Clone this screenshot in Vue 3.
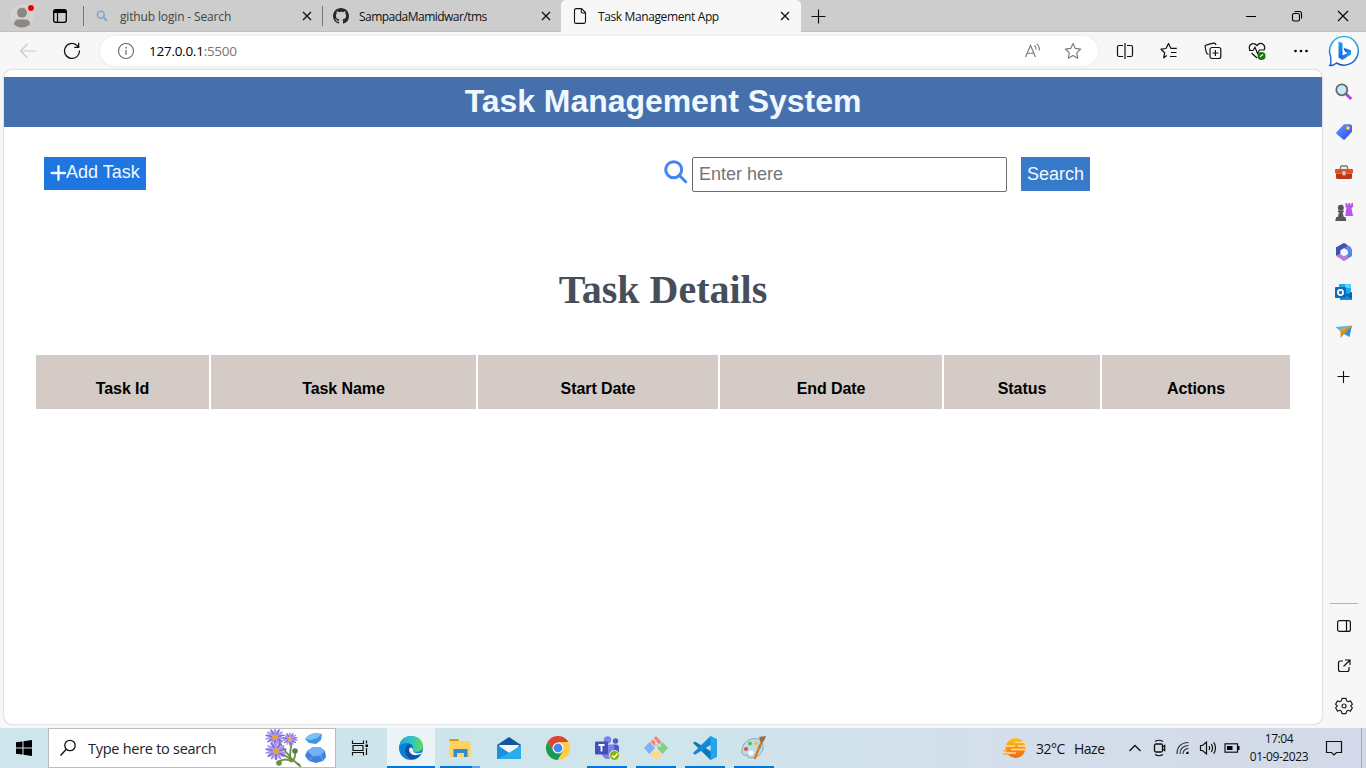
<script setup>
const columns = [
  { label: 'Task Id', cls: 'c-id' },
  { label: 'Task Name', cls: 'c-name' },
  { label: 'Start Date', cls: 'c-start' },
  { label: 'End Date', cls: 'c-end' },
  { label: 'Status', cls: 'c-status' },
  { label: 'Actions', cls: 'c-actions' },
]
</script>

<template>
  <div class="screen">
    <header class="tabs">
      <div class="profile">
        <svg width="30" height="30" viewBox="0 0 30 30">
          <circle cx="15" cy="15" r="10.5" fill="#d3d1ce" stroke="#dedad4" />
          <circle cx="15" cy="11.8" r="5" fill="#8b8784" />
          <path d="M7 23.5q0-5 4.500-5h7q4.500 0 4.500 5-3.500 3-8 3t-8-3z" fill="#8b8784" />
          <circle cx="24" cy="7" r="3.600" fill="#e80000" stroke="#f3dada" />
        </svg>
      </div>
      <div class="tabmenu">
        <svg width="16" height="16" viewBox="0 0 16 16"><rect x="1.700" y="1.700" width="12.600" height="12.600" rx="2" fill="none" stroke="#000" stroke-width="1.300" /><path d="M1.500 5V3.500q0-2 2-2h9q2 0 2 2V5z" fill="#000" /><path d="M5.500 4v10" stroke="#000" stroke-width="1.200" /></svg>
      </div>
      <div class="tab">
        <svg class="fav" width="16" height="16" viewBox="0 0 16 16"><circle cx="6.800" cy="6.700" r="3.400" fill="none" stroke="#77aad6" stroke-width="1.600" /><path d="M9.300 9.200l3.600 3.600" stroke="#77aad6" stroke-width="2" /></svg>
        <span class="tabname t1">github login - Search</span>
        <svg class="x" width="10" height="10" viewBox="0 0 10 10"><path d="M1 1l8 8M9 1L1 9" stroke="#111" stroke-width="1.300" /></svg>
      </div>
      <div class="tab">
        <svg class="fav" width="16" height="16" viewBox="0 0 16 16"><path fill="#24292f" d="M8 0C3.580 0 0 3.580 0 8c0 3.540 2.290 6.530 5.470 7.590.4.070.55-.17.55-.38v-1.490c-2.010.37-2.530-.49-2.690-.94-.09-.23-.48-.94-.82-1.130-.28-.15-.68-.52-.01-.53.63-.01 1.080.58 1.230.82.72 1.210 1.870.87 2.330.66.070-.52.280-.87.510-1.070-1.780-.2-3.640-.89-3.640-3.950 0-.87.310-1.590.82-2.150-.08-.2-.36-1.020.08-2.120 0 0 .67-.21 2.200.82A7.600 7.600 0 018 3.860c.68 0 1.360.09 2 .27 1.530-1.040 2.200-.82 2.200-.82.440 1.100.160 1.920.080 2.120.51.560.820 1.270.820 2.150 0 3.070-1.870 3.750-3.650 3.950.29.250.540.730.540 1.480v2.200c0 .21.150.46.550.38A8 8 0 0016 8c0-4.420-3.580-8-8-8z" /></svg>
        <span class="tabname t2">SampadaMamidwar/tms</span>
        <svg class="x" width="10" height="10" viewBox="0 0 10 10"><path d="M1 1l8 8M9 1L1 9" stroke="#111" stroke-width="1.300" /></svg>
      </div>
      <div class="tab active">
        <svg class="fav" width="16" height="16" viewBox="0 0 16 16"><path d="M4.500.6h5l4 4v9q0 1.800-1.500 1.800H4q-1.500 0-1.500-1.500V2.200Q2.500.6 4.500.6zM9.300.8v3q0 1.200 1.200 1.200h2.800" fill="none" stroke="#111" stroke-width="1.100" /></svg>
        <span class="tabname t3">Task Management App</span>
        <svg class="x" width="10" height="10" viewBox="0 0 10 10"><path d="M1 1l8 8M9 1L1 9" stroke="#111" stroke-width="1.300" /></svg>
      </div>
      <div class="newtab"><svg width="15" height="15" viewBox="0 0 15 15"><path d="M7.500.5v14M.5 7.500h14" stroke="#111" stroke-width="1.200" /></svg></div>
      <div class="winctl">
        <div><svg width="12" height="12" viewBox="0 0 12 12"><path d="M1 6.500h10" stroke="#000" /></svg></div>
        <div><svg width="12" height="12" viewBox="0 0 12 12"><rect x="1.500" y="3.500" width="7" height="7.500" rx="1.500" fill="none" stroke="#000" stroke-width="1.100" /><path d="M3.500 1.500h5q2 0 2 2v5" fill="none" stroke="#000" stroke-width="1.100" /></svg></div>
        <div><svg width="12" height="12" viewBox="0 0 12 12"><path d="M1 1l10 10M11 1L1 11" stroke="#000" stroke-width="1.100" /></svg></div>
      </div>
    </header>

    <div class="middle">
      <main class="left">
        <nav class="toolbar">
          <div class="nav-i back"><svg width="18" height="16" viewBox="0 0 18 16"><path d="M17 8H1.500M8.500 1L1.500 8l7 7" fill="none" stroke="#c9c9c9" stroke-width="1.200" /></svg></div>
          <div class="nav-i"><svg width="18" height="18" viewBox="0 0 18 18"><path d="M16.500 8.500A7.500 7.500 0 1 1 13.800 3.200L15.600 5M15.700.8V5.300H11.300" fill="none" stroke="#111" stroke-width="1.250" /></svg></div>
          <div class="address">
            <svg class="info" width="18" height="18" viewBox="0 0 18 18"><circle cx="9" cy="9" r="7.500" fill="none" stroke="#666" stroke-width="1.100" /><path d="M9 8v4.800" stroke="#777" stroke-width="1.400" /><circle cx="9" cy="5.700" r=".9" fill="#777" /></svg>
            <span class="url">127.0.0.1<i>:5500</i></span>
            <svg class="read" width="18" height="16" viewBox="0 0 18 16"><path d="M1.500 14L6.500 2.500 11.500 14M3.200 10.300h6.600M10.500 2.500q1.800 1.600 1.500 4M12.800.8q3 2.500 2.500 6.700" fill="none" stroke="#777" stroke-width="1.100" /></svg>
            <svg class="star" width="18" height="18" viewBox="0 0 18 18"><path d="M9 1.500l2.300 4.900 5.300.7-3.900 3.700 1 5.400L9 13.600l-4.700 2.600 1-5.400L1.400 7.100l5.300-.7z" fill="none" stroke="#777" stroke-width="1.100" stroke-linejoin="round" /></svg>
          </div>
          <div class="tools">
            <div><svg width="18" height="18" viewBox="0 0 18 18"><path d="M7 3.500H3q-1.500 0-1.500 1.500v8q0 1.500 1.500 1.500h4M11 3.500h4q1.500 0 1.500 1.500v8q0 1.500-1.500 1.500h-4M9 1v16" fill="none" stroke="#111" stroke-width="1.200" /></svg></div>
            <div><svg width="18" height="18" viewBox="0 0 18 18"><path d="M6.800 13.600L3.700 15.800 4.700 10.700 1 7.200 6 6.500 8.500 1.500 10.900 6.400H16.800M11 10.500h5.500M10 14.500h6.500" fill="none" stroke="#111" stroke-width="1.200" stroke-linejoin="round" /></svg></div>
            <div><svg width="18" height="18" viewBox="0 0 18 18"><rect x="6" y="5.500" width="10.800" height="11" rx="2" fill="none" stroke="#111" stroke-width="1.200" /><path d="M11.400 8v6M8.400 11h6M4.500 12.500Q2.500 12 2.200 10L1.200 5Q.8 3.200 2.700 2.800l6.800-1.700Q11.500.7 12 3" fill="none" stroke="#111" stroke-width="1.200" /></svg></div>
            <div><svg width="18" height="18" viewBox="0 0 18 18"><path d="M2 8Q.2 4.800 2.700 2.500 6 .1 9 3.500 12-.1 15.300 2.500 17.800 4.800 16 8M3.500 11l5.500 5M1 8.500h4l2-3.200 2.500 6.200L11.500 8h5" fill="none" stroke="#111" stroke-width="1.200" /><circle cx="13.500" cy="14" r="4" fill="#107c10" /><path d="M12 14.700l3-2.200" stroke="#fff" stroke-width="1.200" /></svg></div>
            <div><svg width="18" height="18" viewBox="0 0 18 18"><circle cx="3.500" cy="9" r="1.300" /><circle cx="9" cy="9" r="1.300" /><circle cx="14.500" cy="9" r="1.300" /></svg></div>
          </div>
        </nav>

        <section class="page">
          <h1>Task Management System</h1>
          <div class="actions">
            <button class="add"><svg width="16" height="16" viewBox="0 0 16 16"><path d="M8.500 1.200v13.600M1.700 8h13.600" stroke="#f0f8ff" stroke-width="2.300" stroke-linecap="round" /></svg>Add Task</button>
            <div class="find">
              <svg width="24" height="24" viewBox="0 0 24 24"><circle cx="9.700" cy="9.700" r="8" fill="none" stroke="#4285f4" stroke-width="3" /><path d="M15.500 15.500l6.200 6.200" stroke="#4285f4" stroke-width="3" stroke-linecap="round" /></svg>
              <input type="text" placeholder="Enter here">
              <button class="go">Search</button>
            </div>
          </div>
          <h2>Task Details</h2>
          <table>
            <thead><tr><th v-for="c in columns" :key="c.label" :class="c.cls">{{ c.label }}</th></tr></thead>
          </table>
        </section>
      </main>

      <aside class="sidebar">
        <div class="s-bing"><svg width="32" height="34" viewBox="0 0 32 34"><defs><linearGradient id="bo" x1="0" y1="0" x2="0" y2="1"><stop stop-color="#20b8ec" /><stop offset="1" stop-color="#2356c8" /></linearGradient><linearGradient id="bb" x1="0" y1="0" x2="1" y2="1"><stop stop-color="#16b3f2" /><stop offset=".5" stop-color="#1a62e4" /><stop offset="1" stop-color="#37c5e8" /></linearGradient></defs><path d="M16 2.500a14.300 14.300 0 1 1-7.500 26.500Q5 32 2 31.500 3.500 29.500 2.500 22A14.400 14.400 0 0 1 16 2.500z" fill="#fff" stroke="url(#bo)" stroke-width="1.500" /><path d="M10.500 7.500l4 1.500v12.500l5-2.600-2.500-1.200-1.600-4 7.600 2.600v4.200L14.500 26l-4-2.600z" fill="url(#bb)" /></svg></div>
        <div><svg width="18" height="18" viewBox="0 0 18 18"><path d="M11 11l5.200 5" stroke="#b43df0" stroke-width="3" /><path d="M10.500 10.500l2 2" stroke="#777" stroke-width="2" /><circle cx="6.800" cy="6.800" r="5.500" fill="#c9e9fa" stroke="#666" stroke-width="1.800" /></svg></div>
        <div><svg width="18" height="18" viewBox="0 0 18 18"><defs><linearGradient id="tg" x1="0" x2="1" y2="1"><stop stop-color="#58a5ff" /><stop offset="1" stop-color="#3a3df0" /></linearGradient></defs><path d="M9 1.200h6q2 0 2 2v5.500l-7 7.500q-1 1-2 0L1.600 11q-1-1 0-2z" fill="url(#tg)" /><circle cx="13" cy="5" r="1.700" fill="#ffe36b" stroke="#e9a800" /></svg></div>
        <div><svg width="18" height="18" viewBox="0 0 18 18"><path d="M5.500 6V4.500q0-1.500 1.500-1.500h4q1.500 0 1.500 1.500V6" fill="none" stroke="#777" stroke-width="1.300" /><rect x="0" y="6" width="18" height="4.500" rx="1" fill="#e0501b" /><path d="M1 10.500h16v4q0 1.500-1.500 1.500h-13Q1 16 1 14.500z" fill="#bd3714" /><rect x="7.300" y="8" width="3.400" height="4.500" rx="1.600" fill="#c9cfd1" /></svg></div>
        <div><svg width="20" height="20" viewBox="0 0 20 20"><path d="M11.500 1h1.700v1.500h1.300V1h1.700v1.500h1.300V1H19v4l-1.500 1 1 6 .8 2h-8L12 8l.7-2-1.200-1z" fill="#b755ed" /><g fill="#575757"><circle cx="6.800" cy="5.800" r="3" /><path d="M3.800 8.500h6v1.700H8.600l1.200 4.800h1.700l.8 4H1.300l.8-4h1.700L5 10.200H3.800z" /></g></svg></div>
        <div><svg width="20" height="20" viewBox="0 0 20 20"><path d="M10 1l6.500 3.800 1.500 3-4 2.300-4-2.500-4 2.500L2 7.500v-2z" fill="#6d80ed" /><path d="M10 1L2 5.500v8L5.800 16l1-3V8L13 4.500V2.700z" fill="#4054a8" /><path d="M2 13.500L10 19l8-5V7.500l-4 2.300V12l-7.500 4z" fill="#4d87e5" /><path d="M2 13.500L10 19l3.500-2v-4L6 12z" fill="#bd79d8" /><path d="M10 6.200l3.500 2v4L10 14.200l-3.500-2v-4z" fill="#f7f7ff" /></svg></div>
        <div><svg width="18" height="18" viewBox="0 0 18 18"><path d="M4 1h12v9H4z" fill="#28a8ea" /><path d="M10 1h6v4h-6z" fill="#50d9ff" /><path d="M4 8l13 3v6H5z" fill="#1490df" /><path d="M17 9v7l-7-4z" fill="#0364b8" /><rect x="0" y="4" width="11" height="11" rx="1" fill="#0f6cbd" /><circle cx="5.500" cy="9.500" r="2.600" fill="none" stroke="#fff" stroke-width="1.700" /></svg></div>
        <div><svg width="18" height="18" viewBox="0 0 18 18"><path d="M.5 4L17 2.500l-10 7z" fill="#41b9f3" /><path d="M17 2.500L14.500 14 8 10.500z" fill="#2e8fe9" /><path d="M17 2.500L5.500 8.700l-2-1.900z" fill="#f5a81c" /><path d="M17 2.500L5.500 8.700v6.600L9 11z" fill="#dd9010" /></svg></div>
        <div class="s-plus"><svg width="14" height="14" viewBox="0 0 14 14"><path d="M6.500 1v12M.5 6.500h12" stroke="#111" stroke-width="1.100" /></svg></div>
        <hr>
        <div><svg width="16" height="16" viewBox="0 0 16 16"><rect x="1.600" y="2.600" width="12.800" height="10.800" rx="2" fill="none" stroke="#111" stroke-width="1.200" /><path d="M10.500 3v10" stroke="#111" stroke-width="1.200" /></svg></div>
        <div><svg width="16" height="16" viewBox="0 0 16 16"><path d="M7 3H4.500Q2.500 3 2.500 5v6.500q0 2 2 2H11q2 0 2-2V9M9 2h5v5M14 2L7.500 8.500" fill="none" stroke="#111" stroke-width="1.200" /></svg></div>
        <div><svg width="18" height="18" viewBox="0 0 18 18"><path d="M7 1.300h4l.6 2.500 1.500.9 2.400-.8 1.900 3.300-1.800 1.700 1.800 1.900-1.900 3.300-2.400-.8-1.500.9-.6 2.500H7l-.6-2.500-1.500-.9-2.400.8L.6 10.800l1.800-1.900L.6 7.200l1.900-3.300 2.400.8 1.500-.9z" fill="none" stroke="#222" stroke-width="1.200" stroke-linejoin="round" /><circle cx="9" cy="9" r="2" fill="none" stroke="#222" stroke-width="1.200" /></svg></div>
      </aside>
    </div>

    <footer class="taskbar">
      <div class="start"><svg width="16" height="16" viewBox="0 0 16 16"><path d="M0 2.300L6.500 1.400v6.100H0zM7.500 1.200L16 0v7.500H7.500zM0 8.500h6.500v6.100L0 13.700zM7.500 8.500H16V16l-8.500-1.200z" /></svg></div>
      <div class="search">
        <svg class="lens" width="18" height="18" viewBox="0 0 18 18"><circle cx="11" cy="6.500" r="5.200" fill="none" stroke="#111" stroke-width="1.300" /><path d="M7.300 10.300L1.500 16.500" stroke="#111" stroke-width="1.400" /></svg>
        <span>Type here to search</span>
        <svg class="flowers" width="64" height="38" viewBox="0 0 64 38">
          <path d="M14 10Q20 24 37 38M28 12Q26 22 26 29M17 24L36 36M31 20Q32 30 28 32M14 33q8-5 14 0" fill="none" stroke="#6d8f43" stroke-width="1.800" />
          <g v-for="f in [[11, 8, .95], [26, 10, .75], [12, 22, 1.050]]" :key="f[1]" :transform="`translate(${f[0]} ${f[1]}) scale(${f[2]} ${f[2] * .85})`">
            <ellipse v-for="n in 14" :key="n" cx="0" cy="-6.500" rx="1.300" ry="4" :fill="n % 2 ? '#8470d8' : '#a993ec'" :transform="`rotate(${n * 25.700})`" />
            <ellipse rx="3.200" ry="2.800" fill="#eb9f32" />
          </g>
          <circle cx="31" cy="22" r="2.800" fill="#547d57" /><circle cx="15" cy="34" r="2.800" fill="#668b43" />
          <path d="M41 10L45 6 51 4 58 5 57 11 52 15 45 14z" fill="#3c95e8" /><path d="M41 10L45 6 51 4 58 5 53 9 47 11z" fill="#7cc0f8" />
          <path d="M41 27L43 22 49 18 56 18 61 22 62 28 59 32 52 34 45 32z" fill="#3f80e0" /><path d="M43 22L49 18 56 18 61 22 57 26 49 27z" fill="#74b2f6" /><path d="M49 27L57 26 59 32M49 27L45 32" fill="none" stroke="#6aa8f2" />
        </svg>
      </div>
      <div class="taskview"><svg width="18" height="18" viewBox="0 0 18 18"><path d="M1.500 1.500V4.500H12.500V1.500M1.500 16.500V13.500H12.500V16.500M2 6.500H12V11.500H2zM15.500 1.500v3M15.500 9V16" fill="none" stroke="#111" stroke-width="1.200" /><path d="M14.500 5.500h2.500v2.500h-2.500z" /></svg></div>
      <div class="apps">
        <div class="app on edge"><svg width="24" height="24" viewBox="0 0 24 24"><defs><linearGradient id="eg" x1="0" x2="1"><stop stop-color="#249fe0" /><stop offset=".5" stop-color="#2dc5c8" /><stop offset="1" stop-color="#65db54" /></linearGradient></defs><circle cx="12" cy="12" r="12" fill="#0b7fd4" /><path d="M.5 10Q2 0 12 0q11 0 12 10 0 5-6 6-5 0-4-3 1-6-6-6-5 0-7.500 3z" fill="url(#eg)" /><path d="M8 9q-5 7 2 13 7 3 12-4-10 3-12-5 0-3 2-4-2-1-4 0z" fill="#174e9f" /><path d="M13 12q-3-1-3 2 1 6 8 5 5-1 5-2.500-8 2-9-2 0-1.500-1-2.500z" fill="#edf5f8" /></svg></div>
        <div class="app files"><svg width="24" height="24" viewBox="0 0 24 24"><path d="M1.500 3h9l1 3h-10z" fill="#d99b08" /><rect x="1.500" y="5" width="21" height="16" fill="#ffd45e" /><path d="M5.500 13h14v8h-3.500v-4H9v4H5.500z" fill="#318bd3" /></svg></div>
        <div class="app none"><svg width="24" height="24" viewBox="0 0 24 24"><path d="M0 9L12 1l12 8v3H0z" fill="#11589f" /><path d="M2 9h20l-3 7H5z" fill="#f5f5f7" /><path d="M0 9l12 8 12-8v14H0z" fill="#28acec" /><path d="M0 9l12 8L0 23z" fill="#1591df" /></svg></div>
        <div class="app none"><svg width="24" height="24" viewBox="0 0 24 24"><circle cx="12" cy="12" r="12" fill="#ffcd40" /><path d="M1.600 6A12 12 0 0 1 22.400 6H12L7 14.500z" fill="#dc4437" /><path d="M1.600 6A12 12 0 0 0 11.500 24L17 15l-10-.5z" fill="#139b58" /><circle cx="12" cy="12" r="5.500" fill="#fff" /><circle cx="12" cy="12" r="4.400" fill="#4285f4" /></svg></div>
        <div class="app on"><svg width="26" height="26" viewBox="0 0 26 26"><circle cx="13.500" cy="5" r="3.700" fill="#7b83eb" /><circle cx="21.500" cy="6" r="2.700" fill="#5059c9" /><rect x="17" y="9.500" width="8" height="10" rx="3" fill="#5059c9" /><path d="M8 9.500h12V18q-1 6-6 6t-6-5z" fill="#7b83eb" /><rect x="1" y="6.500" width="13" height="13" rx="1" fill="#464eb8" /><path d="M4.500 10h6M7.500 10v6.500" stroke="#fff" stroke-width="1.800" /><circle cx="20.500" cy="20.500" r="5" fill="#85b600" stroke="#e8f2ce" /><path d="M18 20.500l2 2 3.500-4" fill="none" stroke="#fff" stroke-width="1.500" /></svg></div>
        <div class="app on"><svg width="26" height="26" viewBox="0 0 26 26"><path d="M1 13l5.500-6 5.500 6-5.500 6z" fill="#80aff8" /><path d="M7.500 7L13 1l5.500 6-5.500 5z" fill="#f57f79" /><path d="M7.500 19l5.500-6 5.500 6-5.500 6z" fill="#ffd98a" /><path d="M14 13l5.500-6 5.500 6-5.500 6z" fill="#80d184" /><path d="M9.500 3l3.500 3.500V17M13 7.500l5 4" fill="none" stroke="#d8e7e8" stroke-width="1.500" /></svg></div>
        <div class="app on"><svg width="24" height="24" viewBox="0 0 24 24"><path d="M0 7l2-1.600L24 19l-6.500 5z" fill="#0879bf" /><path d="M0 17l2 1.700L24 5l-6.500-5z" fill="#1689d3" /><path d="M17.500 0L24 3v18l-6.500 3z" fill="#26a3ee" /></svg></div>
        <div class="app on"><svg width="26" height="26" viewBox="0 0 26 26"><path d="M3 9Q9 2 17 4q6 2 5 10-2 8-12 9-4 0-4-3-5 1-5-3-.5-4 2-8z" fill="#bfdce9" stroke="#86a9bd" /><circle cx="9" cy="8.500" r="2" fill="#65b957" /><circle cx="15" cy="8" r="2" fill="#efc34d" /><circle cx="5" cy="14" r="2" fill="#e34e43" /><circle cx="18.500" cy="12" r="1.800" fill="#3ba1dc" /><circle cx="10" cy="18" r="2.400" fill="#fff" /><path d="M21 6L13.500 24" stroke="#d47c2f" stroke-width="2.400" /><path d="M18 2l7-1-2 5-3 2z" fill="#9c6949" /></svg></div>
      </div>
      <div class="weather">
        <svg width="24" height="22" viewBox="0 0 24 22"><defs><linearGradient id="wg" x2="0" y2="1"><stop stop-color="#ffc414" /><stop offset="1" stop-color="#ef6719" /></linearGradient></defs><circle cx="12.500" cy="11" r="10" fill="url(#wg)" /><path d="M12 5.300h12M3 9h9M15 9h8M8 12.500h14M1 16h12" stroke="#ffe0a1" stroke-width="1.300" /><path d="M0 13.800h4M0 17h5" stroke="#f7a53a" stroke-width="1.300" /></svg>
        <span class="temp">32°C</span><span class="haze">Haze</span>
      </div>
      <div class="tray">
        <div class="chev"><svg width="14" height="14" viewBox="0 0 14 14"><path d="M1.500 10L7 4.500 12.500 10" fill="none" stroke="#111" stroke-width="1.300" /></svg></div>
        <div><svg width="16" height="18" viewBox="0 0 16 18"><rect x="3.500" y="5" width="8" height="8" rx="1.500" fill="none" stroke="#111" stroke-width="1.300" /><path d="M11.500 8l2.200-1.500v5L11.500 10M4 2.500q4-2.500 8 0M4 15.500q4 2.500 8 0" fill="none" stroke="#111" stroke-width="1.200" /></svg></div>
        <div><svg width="16" height="16" viewBox="0 0 16 16"><path d="M2 14Q2 3 13.500 2.500M5 14Q5 6 13.500 5.500M8 14q0-5 5.500-5.500" fill="none" stroke="#333" stroke-width="1.200" /><path d="M11 14q0-2.500 2.500-2.500V14z" /></svg></div>
        <div><svg width="18" height="16" viewBox="0 0 18 16"><path d="M1.500 5.500h2l4-3.500v12l-4-3.500h-2zM10 6q1.200 2 0 4M12.300 4q2.500 4 0 8M14.700 2.200q3.600 5.800 0 11.600" fill="none" stroke="#111" stroke-width="1.200" /></svg></div>
        <div class="bat"><svg width="16" height="12" viewBox="0 0 16 12"><rect x="1" y="1.800" width="12.500" height="8.400" fill="none" stroke="#111" stroke-width="1.200" /><path d="M3 4h5.500v4H3zM14 4h1.500v4H14z" /></svg></div>
      </div>
      <div class="clock"><span class="time">17:04</span><span class="date">01-09-2023</span></div>
      <div class="note"><svg width="18" height="18" viewBox="0 0 18 18"><path d="M1.500 2.500h15v11h-5L9 16l-2.500-2.500h-5z" fill="none" stroke="#111" stroke-width="1.200" /></svg></div>
      <div class="peek"></div>
    </footer>
  </div>
</template>

<style>
html, body { margin: 0; overflow: hidden; }
</style>

<style scoped>
* { box-sizing: border-box; }
svg { display: block; flex: none; }
.screen { width: 1366px; height: 768px; display: flex; flex-direction: column; background: #f7f7f7; font: 12px "Open Sans", "Noto Sans", sans-serif; color: #111; overflow: hidden; white-space: nowrap; }
.tabs { height: 32px; flex: none; display: flex; background: #cdcdcd; box-shadow: inset 0 -1px #bfbfbf; }
.profile { width: 44px; padding: 1px 0 0 7px; }
.tabmenu { width: 39px; display: flex; align-items: center; padding-left: 8px; }
.tab { width: 239px; display: flex; align-items: center; position: relative; padding-left: 11px; }
.tab:not(.active)::before { content: ""; position: absolute; left: 0; top: 6px; height: 20px; width: 1px; background: #777; }
.tab.active { width: 240px; background: #f7f7f7; border-radius: 5px 5px 0 0; }
.tabname { margin-left: 10px; flex: 1; }
.t1 { color: #444; letter-spacing: -.15px; }
.t2 { letter-spacing: -.52px; }
.t3 { letter-spacing: -.38px; }
.tab .x { margin-right: 10px; }
.tab.active .x { margin-right: 11px; }
.newtab { width: 34px; display: flex; align-items: center; padding-left: 10px; }
.winctl { margin-left: auto; display: flex; }
.winctl div { width: 46px; display: flex; align-items: center; justify-content: center; }
.middle { height: 696px; display: flex; }
.left { width: 1322px; flex: none; display: flex; flex-direction: column; }
.toolbar { height: 38px; display: flex; padding-left: 6px; }
.nav-i { width: 44px; flex: none; display: flex; align-items: center; justify-content: center; }
.nav-i + .address { margin-left: 6px; }
.address { width: 998px; flex: none; height: 30px; margin-top: 4px; background: #fff; border-radius: 15px; display: flex; align-items: center; padding-left: 17px; box-shadow: 0 0 3px #e2e2e2; }
.url { font-size: 13.500px; margin-left: 14px; letter-spacing: -.26px; flex: 1; color: #000; }
.url i { font-style: normal; color: #767676; }
.read { margin-right: 22px; }
.star { margin-right: 16px; }
.tools { display: flex; flex: none; margin-left: 5px; }
.tools div { width: 44.100px; flex: none; display: flex; align-items: center; justify-content: center; }
.page { width: 1318px; height: 654px; margin-left: 4px; background: #fff; border-radius: 8px; box-shadow: 0 0 2px #aaa; padding-top: 7px; font-family: "Liberation Sans", Arial, sans-serif; }
h1 { margin: 0; height: 50px; background: #4670ac; color: #f0f8ff; text-align: center; font-size: 32px; line-height: 48px; letter-spacing: -.05px; border-radius: 0; }
.actions { display: flex; height: 35px; margin: 30px 40px 0; align-items: flex-start; }
button { border: 0; color: #f0f8ff; font: 18px "Liberation Sans", Arial, sans-serif; padding: 0; }
.add { width: 102px; height: 33px; background: #1f76e0; display: flex; align-items: center; padding: 0 0 2px 6px; line-height: 31px; }
.find { margin-left: 518px; display: flex; align-items: flex-start; }
.find svg { margin: 3px 4px 0 0; }
input { width: 315px; height: 35px; border: 1px solid #6d6d6d; border-radius: 2px; padding: 0 6px; font: 18px "Liberation Sans", Arial, sans-serif; background: #fff; }
input::placeholder { color: #757575; opacity: 1; }
.go { width: 69px; height: 34px; margin-left: 14px; background: #367ac9; line-height: 34px; }
h2 { margin: 74px 0 0; text-align: center; font: bold 40px/48px "Liberation Serif", "Times New Roman", serif; color: #464e5a; }
table { margin: 39px 0 0 30px; width: 1258px; table-layout: fixed; border-collapse: separate; border-spacing: 2px 2px; }
th { background: #d4cbc6; height: 54px; padding: 13px 0 0; font-size: 16px; color: #000; letter-spacing: -.08px; }
.c-id { width: 173px; }
.c-name { width: 265px; }
.c-start { width: 240px; }
.c-end { width: 222px; }
.c-status { width: 156px; }
.c-actions { width: 188px; }
.sidebar { width: 44px; flex: none; display: flex; flex-direction: column; padding-bottom: 2px; }
.sidebar div { height: 40px; flex: none; display: flex; align-items: center; justify-content: center; }
.sidebar .s-bing { height: 38px; margin-bottom: 2px; }
.sidebar .s-plus { height: 49px; }
.sidebar hr { width: 28px; height: 1px; border: 0; background: #b5b5b5; margin: auto auto 2px; }
.taskbar { height: 40px; flex: none; display: flex; background: linear-gradient(90deg, #cee5ec, #cfe4eb 50%, #d3dfeb 72%, #d3d9e8); }
.start, .taskview { width: 48px; display: flex; align-items: center; justify-content: center; }
.search { width: 288px; background: #fff; border: 1px solid #bcbcbc; display: flex; align-items: center; }
.lens { margin-left: 10px; }
.search span { font-size: 14.500px; margin-left: 11px; letter-spacing: -.27px; flex: 1; color: #222; }
.flowers { margin-right: 7px; }
.apps { display: flex; margin-left: 3px; gap: 1px; }
.app { width: 48px; height: 40px; display: flex; align-items: center; justify-content: center; position: relative; }
.app::after { content: ""; position: absolute; left: 4px; right: 4px; bottom: 0; height: 2px; background: #0078d7; }
.app.edge { background: #eaf4f7; }
.app.edge::after { left: 0; right: 0; }
.app.files::after { background: linear-gradient(90deg, #0078d7 80%, #5ba7e5 80%); }
.app.none::after { display: none; }
.weather { margin-left: 225px; width: 120px; display: flex; align-items: center; font-size: 14px; }
.temp { width: 38px; margin-left: 9px; letter-spacing: -.5px; }
.haze { letter-spacing: -.5px; }
.tray { display: flex; align-items: center; }
.tray div { width: 24.200px; display: flex; align-items: center; justify-content: center; }
.clock { width: 70px; display: flex; flex-direction: column; align-items: center; line-height: 18px; padding-top: 2px; letter-spacing: -.42px; }
.note { width: 40px; display: flex; align-items: center; justify-content: center; }
.peek { width: 5px; margin-left: auto; border-left: 1px solid #a3acb9; }
</style>
